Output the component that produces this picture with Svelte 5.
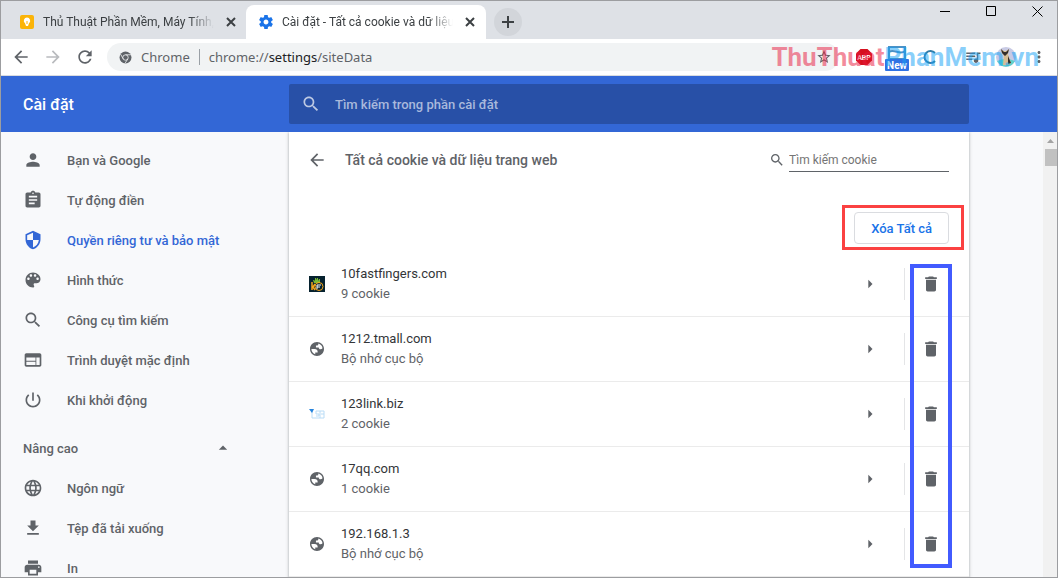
<script>
    const icons = {
        person: "M12 12c2.2 0 4-1.8 4-4s-1.800-4-4-4-4 1.800-4 4 1.800 4 4 4zm0 2c-2.700 0-8 1.300-8 4v2h16v-2c0-2.700-5.300-4-8-4z",
        autofill: "M19 3h-4.180C14.400 1.840 13.300 1 12 1s-2.400.84-2.820 2H5c-1.100 0-2 .9-2 2v14c0 1.100.9 2 2 2h14c1.100 0 2-.9 2-2V5c0-1.100-.9-2-2-2zm-7 0c.55 0 1 .45 1 1s-.45 1-1 1-1-.45-1-1 .45-1 1-1zm2 14H7v-2h7v2zm3-4H7v-2h10v2zm0-4H7V7h10v2z",
        shield: "M12 1L3 5v6c0 5.550 3.840 10.740 9 12 5.160-1.260 9-6.450 9-12V5l-9-4zm0 10.990h7c-.53 4.120-3.280 7.790-7 8.940V12H5V6.300l7-3.110v8.800z",
        palette: "M12 3c-4.970 0-9 4.030-9 9s4.030 9 9 9c.83 0 1.500-.67 1.500-1.500 0-.39-.15-.74-.39-1.010-.23-.26-.38-.61-.38-.99 0-.83.67-1.500 1.500-1.500H16c2.760 0 5-2.240 5-5 0-4.420-4.030-8-9-8zm-5.500 9c-.83 0-1.500-.67-1.500-1.500S5.670 9 6.500 9 8 9.670 8 10.500 7.330 12 6.500 12zm3-4C8.670 8 8 7.330 8 6.500S8.670 5 9.500 5s1.500.67 1.500 1.500S10.330 8 9.500 8zm5 0c-.83 0-1.500-.67-1.500-1.500S13.670 5 14.500 5s1.500.67 1.500 1.500S15.330 8 14.500 8zm3 4c-.83 0-1.500-.67-1.500-1.500S16.670 9 17.500 9s1.500.67 1.500 1.500-.67 1.500-1.500 1.500z",
        search: "M15.500 14h-.79l-.28-.27C15.410 12.590 16 11.110 16 9.500 16 5.910 13.090 3 9.500 3S3 5.910 3 9.500 5.910 16 9.500 16c1.610 0 3.090-.59 4.230-1.570l.27.28v.79l5 4.990L20.490 19l-4.990-5zm-6 0C7.010 14 5 11.990 5 9.500S7.010 5 9.500 5 14 7.010 14 9.500 11.990 14 9.500 14z",
        browser: "M20 4H4c-1.100 0-1.990.9-1.990 2L2 18c0 1.100.9 2 2 2h16c1.100 0 2-.9 2-2V6c0-1.100-.9-2-2-2zm-5 14H4v-4h11v4zm0-5H4V9h11v4zm5 5h-4V9h4v9z",
        power: "M13 3h-2v10h2V3zm4.830 2.170l-1.420 1.420C17.990 7.860 19 9.810 19 12c0 3.870-3.130 7-7 7s-7-3.130-7-7c0-2.190 1.010-4.140 2.580-5.420L6.170 5.170C4.230 6.820 3 9.260 3 12c0 4.970 4.030 9 9 9s9-4.030 9-9c0-2.740-1.230-5.180-3.170-6.830z",
        language: "M11.990 2C6.470 2 2 6.480 2 12s4.470 10 9.990 10C17.520 22 22 17.520 22 12S17.520 2 11.990 2zm6.930 6h-2.950c-.32-1.250-.78-2.450-1.380-3.560 1.840.63 3.370 1.910 4.330 3.560zM12 4.040c.83 1.200 1.480 2.530 1.910 3.960h-3.820c.43-1.430 1.080-2.760 1.910-3.960zM4.260 14C4.100 13.360 4 12.690 4 12s.1-1.360.26-2h3.380c-.08.66-.14 1.320-.14 2s.06 1.340.14 2H4.260zm.82 2h2.950c.32 1.250.78 2.450 1.380 3.560-1.840-.63-3.370-1.900-4.330-3.560zm2.950-8H5.080c.96-1.660 2.490-2.930 4.330-3.560C8.810 5.550 8.350 6.750 8.030 8zM12 19.960c-.83-1.200-1.480-2.530-1.910-3.960h3.820c-.43 1.430-1.080 2.760-1.910 3.960zM14.340 14H9.660c-.09-.66-.16-1.320-.16-2s.07-1.350.16-2h4.680c.09.65.16 1.320.16 2s-.07 1.340-.16 2zm.25 5.560c.6-1.110 1.060-2.310 1.380-3.560h2.950c-.96 1.650-2.490 2.930-4.330 3.560zM16.360 14c.08-.66.14-1.320.14-2s-.06-1.340-.14-2h3.380c.16.64.26 1.310.26 2s-.1 1.360-.26 2h-3.380z",
        download: "M19 9h-4V3H9v6H5l7 7 7-7zM5 18v2h14v-2H5z",
        print: "M19 8H5c-1.660 0-3 1.340-3 3v6h4v4h12v-4h4v-6c0-1.660-1.340-3-3-3zm-3 11H8v-5h8v5zm3-7c-.55 0-1-.45-1-1s.45-1 1-1 1 .45 1 1-.45 1-1 1zm-1-9H6v4h12V3z",
        back: "M20 11H7.830l5.590-5.590L12 4l-8 8 8 8 1.410-1.410L7.830 13H20v-2z",
        forward: "M12 4l-1.410 1.410L16.170 11H4v2h12.170l-5.580 5.590L12 20l8-8z",
        reload: "M17.650 6.350C16.200 4.900 14.210 4 12 4c-4.420 0-7.990 3.580-7.990 8s3.570 8 7.990 8c3.730 0 6.840-2.550 7.730-6h-2.080c-.82 2.330-3.040 4-5.650 4-3.310 0-6-2.690-6-6s2.690-6 6-6c1.660 0 3.140.69 4.220 1.780L13 11h7V4l-2.350 2.350z",
        gear: "M19.430 12.980c.04-.32.07-.64.07-.98s-.03-.66-.07-.98l2.110-1.650c.19-.15.24-.42.12-.64l-2-3.460c-.12-.22-.39-.3-.61-.22l-2.490 1c-.52-.4-1.080-.73-1.690-.98l-.38-2.650C14.460 2.180 14.250 2 14 2h-4c-.25 0-.46.18-.49.42l-.38 2.650c-.61.25-1.170.59-1.690.98l-2.490-1c-.23-.09-.49 0-.61.22l-2 3.460c-.13.22-.07.49.12.64l2.110 1.650c-.04.32-.07.65-.07.98s.03.66.07.98l-2.110 1.650c-.19.15-.24.42-.12.64l2 3.460c.12.22.39.3.61.22l2.490-1c.52.4 1.080.73 1.690.98l.38 2.650c.03.24.24.42.49.42h4c.25 0 .46-.18.49-.42l.38-2.650c.61-.25 1.170-.59 1.690-.98l2.490 1c.23.09.49 0 .61-.22l2-3.460c.12-.22.07-.49-.12-.64l-2.110-1.650zM12 15.500c-1.930 0-3.500-1.570-3.500-3.500s1.570-3.500 3.500-3.500 3.500 1.570 3.500 3.500-1.570 3.500-3.500 3.500z",
        star: "M22 9.240l-7.190-.62L12 2 9.190 8.630 2 9.240l5.460 4.730L5.820 21 12 17.270 18.180 21l-1.630-7.030L22 9.240zM12 15.400l-3.760 2.270 1-4.280-3.320-2.880 4.380-.38L12 6.100l1.710 4.040 4.380.38-3.320 2.880 1 4.280L12 15.400z",
        queue: "M15 6H3v2h12V6zm0 4H3v2h12v-2zM3 16h8v-2H3v2zM17 6v8.180c-.31-.11-.65-.18-1-.18-1.660 0-3 1.340-3 3s1.340 3 3 3 3-1.340 3-3V8h3V6h-5z",
        more: "M12 8c1.100 0 2-.9 2-2s-.9-2-2-2-2 .9-2 2 .9 2 2 2zm0 2c-1.100 0-2 .9-2 2s.9 2 2 2 2-.9 2-2-.9-2-2-2zm0 6c-1.100 0-2 .9-2 2s.9 2 2 2 2-.9 2-2-.9-2-2-2z",
        trash: "M6 19c0 1.100.9 2 2 2h8c1.100 0 2-.9 2-2V7H6v12zM19 4h-3.500l-1-1h-5l-1 1H5v2h14V4z",
        globe: "M12 2C6.480 2 2 6.480 2 12s4.480 10 10 10 10-4.480 10-10S17.520 2 12 2zM4 12h4.400c3.410.02 4.910 1.730 4.500 5.130H9.500v2.470C6.300 18.700 4 15.600 4 12zm15.900-1c-.6 1-1.600 1.500-2.900 1.500-1.600 0-2.500-.9-2.500-2.500h-4V7.100h2.400c.6-.9 1.100-1.500 1.100-2.900 3.200.8 5.600 3.500 5.900 6.800z",
        up: "M7 14l5-5 5 5z",
        right: "M10 17l5-5-5-5v10z",
    }

    const basicItems = [
        { icon: "person", label: "Bạn và Google" },
        { icon: "autofill", label: "Tự động điền" },
        { icon: "shield", label: "Quyền riêng tư và bảo mật", selected: true },
        { icon: "palette", label: "Hình thức" },
        { icon: "search", label: "Công cụ tìm kiếm" },
        { icon: "browser", label: "Trình duyệt mặc định" },
        { icon: "power", label: "Khi khởi động" },
    ]
    const advancedItems = [
        { icon: "language", label: "Ngôn ngữ" },
        { icon: "download", label: "Tệp đã tải xuống" },
        { icon: "print", label: "In" },
    ]
    const sites = [
        { name: "10fastfingers.com", data: "9 cookie", favicon: "fingers" },
        { name: "1212.tmall.com", data: "Bộ nhớ cục bộ" },
        { name: "123link.biz", data: "2 cookie", favicon: "link" },
        { name: "17qq.com", data: "1 cookie" },
        { name: "192.168.1.3", data: "Bộ nhớ cục bộ" },
    ]
</script>

{#snippet icon(name, size = "md")}
    <svg class="icon {size}" viewBox="0 0 24 24" aria-hidden="true"><path d={icons[name]} /></svg>
{/snippet}

{#snippet cross()}
    <svg class="cross" viewBox="0 0 10 10" aria-hidden="true"><path d="M1 1l8 8M9 1l-8 8" /></svg>
{/snippet}

{#snippet menu(items)}
    {#each items as item}
        <a class="item" class:selected={item.selected} href="#{item.icon}">
            {@render icon(item.icon)}
            <span>{item.label}</span>
        </a>
    {/each}
{/snippet}

<div class="window">
    <div class="titlebar">
        <div class="tab">
            <svg class="tab-icon" viewBox="0 0 14 14" aria-hidden="true">
                <rect width="14" height="14" rx="2" fill="#fbb408" />
                <path d="M7 2.500a3.200 3.200 0 0 0-2 5.700L6 11h2l1-2.800A3.200 3.200 0 0 0 7 2.500z" fill="#fff" />
                <path d="M7 6v3" stroke="#fbb408" />
            </svg>
            <span class="tab-title">Thủ Thuật Phần Mềm, Máy Tính,</span>
            <button aria-label="Đóng thẻ">{@render cross()}</button>
        </div>
        <div class="tab active">
            <svg class="tab-icon gear" viewBox="2 2 20 20" aria-hidden="true"><path d={icons.gear} /></svg>
            <span class="tab-title">Cài đặt - Tất cả cookie và dữ liệu</span>
            <button aria-label="Đóng thẻ">{@render cross()}</button>
        </div>
        <button class="new-tab" aria-label="Thẻ mới">
            <svg viewBox="0 0 12 12" aria-hidden="true"><path d="M6 0v12M0 6h12" /></svg>
        </button>
        <div class="controls">
            <button aria-label="Thu nhỏ"><svg viewBox="0 0 11 11"><path d="M0 5.500h10" /></svg></button>
            <button aria-label="Phóng to"><svg viewBox="0 0 11 11"><path d="M.5.5h9v9h-9z" /></svg></button>
            <button aria-label="Đóng"><svg viewBox="0 0 11 11"><path d="M.5.500l10 10M10.500.500l-10 10" /></svg></button>
        </div>
    </div>

    <div class="toolbar">
        <button class="nav" aria-label="Quay lại">{@render icon("back")}</button>
        <button class="nav off" aria-label="Tiến">{@render icon("forward")}</button>
        <button class="nav" aria-label="Tải lại">{@render icon("reload")}</button>
        <div class="omnibox">
            <svg class="chrome" viewBox="0 0 24 24" aria-hidden="true">
                <circle cx="12" cy="12" r="11" fill="#5f6368" />
                <circle cx="12" cy="12" r="5" fill="none" stroke="#f1f3f4" stroke-width="1.500" />
                <path d="M12 7h10M7.700 14.500L3 6M16.300 14.500L11 23" stroke="#f1f3f4" stroke-width="1.500" />
            </svg>
            <span>Chrome</span>
            <i></i>
            <span class="url">chrome://<b>settings</b>/siteData</span>
            <button aria-label="Đánh dấu trang">{@render icon("star", "sm")}</button>
        </div>
        <div class="extensions">
            <button aria-label="Adblock Plus">
                <svg viewBox="0 0 18 18">
                    <path d="M5.500 1h7L17 5.500v7L12.500 17h-7L1 12.500v-7z" fill="#d5101f" />
                    <text x="9" y="12" text-anchor="middle">ABP</text>
                </svg>
            </button>
            <button aria-label="Tiện ích mới">
                <svg class="fresh" viewBox="0 0 24 28">
                    <path d="M4 4h16v12H4zM4 9c5-4 11 4 16-1" fill="none" stroke="#4b91c5" stroke-width="2" />
                    <rect y="16" width="24" height="12" rx="1" fill="#2f72e4" />
                    <text x="12" y="26" text-anchor="middle">New</text>
                </svg>
            </button>
            <button aria-label="Cốc Cốc">
                <svg viewBox="0 0 18 18"><path d="M14 5a6 6 0 1 0 0 8" fill="none" stroke="#337da8" stroke-width="2" /></svg>
            </button>
            <button class="media" aria-label="Danh sách phát">{@render icon("queue")}</button>
            <button aria-label="Hồ sơ">
                <svg class="avatar" viewBox="0 0 20 20">
                    <circle cx="10" cy="10" r="10" fill="#c8cae4" />
                    <path d="M1 14q9-4 18 0a10 10 0 0 1-18 0z" fill="#5ed1cc" />
                    <path d="M5 2l3 2h2l3-2-1 5 3 9-2 2H7l1-9-2-3z" fill="#d7bd94" />
                    <path d="M5 2l3 3h2l3-3-1 4-3 3-3-3zM12 9l3 7-3 1z" fill="#342d2b" />
                </svg>
            </button>
            <button aria-label="Tùy chỉnh">{@render icon("more")}</button>
        </div>
        <div class="watermark"><span>ThuThuat</span><span class="blue">PhanMem.vn</span></div>
    </div>

    <header>
        <h1>Cài đặt</h1>
        <label class="search">
            {@render icon("search")}
            <input type="search" placeholder="Tìm kiếm trong phần cài đặt" aria-label="Tìm kiếm trong phần cài đặt" />
        </label>
    </header>

    <div class="body">
        <nav class="sidebar">
            {@render menu(basicItems)}
            <button class="advanced">Nâng cao {@render icon("up")}</button>
            {@render menu(advancedItems)}
        </nav>

        <main>
            <div class="heading">
                <button aria-label="Quay lại">{@render icon("back")}</button>
                <h2>Tất cả cookie và dữ liệu trang web</h2>
                <label class="filter">
                    {@render icon("search", "sm")}
                    <input type="search" placeholder="Tìm kiếm cookie" aria-label="Tìm kiếm cookie" />
                </label>
            </div>
            <div class="actions">
                <div class="marked">
                    <button class="clear">Xóa Tất cả</button>
                </div>
            </div>
            <div class="sites">
                {#each sites as site}
                    <div class="site">
                        {#if site.favicon == "fingers"}
                            <svg class="favicon" viewBox="0 0 16 16" aria-hidden="true">
                                <rect width="16" height="16" fill="#06222f" />
                                <path d="M5 7l-1-3h1l1 1V2h1v2l1-2h1v3l1-2h1v4z" fill="#79b833" />
                                <path d="M3 6v8M6 8l-2 3 2 3" fill="none" stroke="#f5a51b" stroke-width="1.500" />
                                <circle cx="10" cy="10.500" r="4" fill="none" stroke="#f5a51b" />
                                <path d="M8 13V9h4M8 11h3" fill="none" stroke="#fff" />
                            </svg>
                        {:else if site.favicon == "link"}
                            <svg class="favicon" viewBox="0 0 16 16" aria-hidden="true">
                                <path d="M3 5v7h12V5H7v3h3v2H7M11 5v7M12 8h3" fill="none" stroke="#b9dcf6" />
                                <path d="M0 3h5L3 7z" fill="#2583dc" />
                            </svg>
                        {:else}
                            <svg class="favicon globe" viewBox="2 2 20 20" aria-hidden="true"><path d={icons.globe} /></svg>
                        {/if}
                        <div class="details">
                            <div class="name">{site.name}</div>
                            <div class="data">{site.data}</div>
                        </div>
                        <button class="open" aria-label="Mở {site.name}">{@render icon("right")}</button>
                        <button class="delete" aria-label="Xóa {site.name}">{@render icon("trash")}</button>
                    </div>
                {/each}
                <div class="delete-mark"></div>
            </div>
        </main>

        <div class="scrollbar">
            <svg viewBox="0 0 7 4" aria-hidden="true"><path d="M0 4l3.500-4L7 4z" /></svg>
            <div class="thumb"></div>
        </div>
    </div>
</div>

<style>
    :global(body){
        font-family: Roboto, "Liberation Sans", sans-serif;
        font-size: 13px;
        color: #5f6368;
    }

    .window{
        box-sizing: border-box;
        height: 100vh;
        display: flex;
        flex-direction: column;
        overflow: hidden;
        border: 1px solid #9c9da0;
        background: #f8f9fb;
    }

    button{
        display: flex;
        align-items: center;
        justify-content: center;
        padding: 0;
        border: 0;
        background: none;
        color: inherit;
        font: inherit;
    }

    input{
        min-width: 0;
        padding: 0;
        border: 0;
        outline: 0;
        background: none;
        font: inherit;
    }

    h1, h2{
        margin: 0;
        font-weight: 500;
    }

    .icon{
        flex: none;
        width: 20px;
        height: 20px;
        fill: currentColor;
    }

    .icon.sm{
        width: 16px;
        height: 16px;
    }

    .titlebar{
        flex: none;
        display: flex;
        height: 38px;
        background: #dee1e6;
        color: #3c4043;
        font-size: 12px;
    }

    .tab{
        box-sizing: border-box;
        display: flex;
        align-items: center;
        gap: 9px;
        width: 240px;
        margin-top: 4px;
        padding: 0 8px 0 13px;
        border-radius: 8px 8px 0 0;
    }

    .tab:first-child{
        width: 245px;
        padding: 0 7px 0 19px;
    }

    .tab.active{
        background: white;
    }

    .tab-icon{
        flex: none;
        width: 14px;
        height: 14px;
    }

    .gear{
        fill: #1a73e8;
    }

    .tab-title{
        flex: 1;
        overflow: hidden;
        white-space: nowrap;
        mask-image: linear-gradient(to left, transparent, black 24px);
    }

    .tab button{
        width: 16px;
        height: 16px;
    }

    .cross{
        width: 10px;
        height: 10px;
        stroke: #3c4043;
        stroke-width: 2;
    }

    .new-tab{
        width: 28px;
        height: 28px;
        margin: 7px 0 0 8px;
        border-radius: 50%;
        background: #d2d5da;
    }

    .new-tab svg{
        width: 12px;
        height: 12px;
        stroke: #3c4043;
        stroke-width: 2;
    }

    .controls{
        display: flex;
        gap: 6px;
        margin-left: auto;
    }

    .controls button{
        width: 40px;
        height: 20px;
    }

    .controls svg{
        width: 11px;
        height: 11px;
        fill: none;
        stroke: black;
    }

    .toolbar{
        flex: none;
        position: relative;
        display: flex;
        align-items: center;
        height: 36px;
        padding: 0 2px 0 4px;
        border-bottom: 1px solid #dadce0;
        background: white;
    }

    .nav{
        width: 32px;
        height: 28px;
    }

    .nav.off{
        color: #b9bbbe;
    }

    .omnibox{
        flex: 1;
        display: flex;
        align-items: center;
        gap: 9px;
        height: 28px;
        margin-left: 6px;
        padding: 0 7px 0 12px;
        border-radius: 14px;
        background: #f1f3f4;
        font-family: "Noto Sans", "Open Sans", sans-serif;
    }

    .omnibox i{
        width: 1px;
        height: 16px;
        background: #9aa0a6;
    }

    .omnibox b{
        color: #202124;
        font-weight: 400;
    }

    .url{
        flex: 1;
    }

    .chrome{
        width: 13px;
        height: 13px;
    }

    .extensions{
        display: flex;
        margin-left: 8px;
    }

    .extensions button{
        width: 33px;
        height: 28px;
    }

    .extensions svg{
        width: 18px;
        height: 18px;
    }

    .extensions .fresh{
        width: 24px;
        height: 28px;
    }

    .extensions .avatar{
        width: 20px;
        height: 20px;
    }

    .extensions text{
        fill: white;
        font-size: 7px;
        font-weight: 700;
    }

    .extensions .fresh text{
        font-size: 10px;
    }

    .extensions .media{
        margin-left: 10px;
    }

    .watermark{
        position: absolute;
        top: 0;
        right: 18px;
        color: rgba(232, 24, 60, 0.5);
        font-size: 26px;
        font-weight: 700;
        line-height: 36px;
        pointer-events: none;
    }

    .watermark .blue{
        color: rgba(20, 160, 245, 0.5);
    }

    header, .body{
        display: grid;
        grid-template-columns: 288px minmax(0, 680px) 1fr;
    }

    header{
        flex: none;
        align-items: center;
        height: 56px;
        background: #3367d6;
        color: white;
    }

    h1{
        padding-left: 22px;
        font-size: 16px;
    }

    .search{
        display: flex;
        align-items: center;
        gap: 14px;
        height: 40px;
        padding: 0 12px;
        border-radius: 2px;
        background: #2850a7;
        color: #bdc9e3;
        font-weight: 500;
    }

    .search input{
        flex: 1;
        color: white;
    }

    .search input::placeholder{
        color: #a9b9dc;
    }

    .body{
        flex: 1;
        min-height: 0;
    }

    .sidebar{
        padding-top: 8px;
        font-weight: 500;
    }

    .item{
        display: flex;
        align-items: center;
        gap: 24px;
        height: 40px;
        padding-left: 22px;
        color: inherit;
        text-decoration: none;
    }

    .item.selected{
        color: #3367d6;
    }

    .advanced{
        justify-content: space-between;
        width: 232px;
        height: 40px;
        margin-top: 8px;
        padding-left: 22px;
    }

    main{
        background: white;
        box-shadow: 0 1px 2px rgba(60, 64, 67, 0.3), 0 1px 3px 1px rgba(60, 64, 67, 0.15);
        clip-path: inset(0 -4px);
    }

    .heading{
        display: flex;
        align-items: center;
        height: 56px;
        padding: 0 20px 0 18px;
    }

    h2{
        flex: 1;
        padding-left: 18px;
        font-size: 14px;
    }

    .filter{
        display: flex;
        align-items: center;
        gap: 4px;
        font-size: 12px;
    }

    .filter input{
        width: 160px;
        height: 24px;
        border-bottom: 1px solid #5f6368;
    }

    .filter input::placeholder{
        color: #757575;
    }

    .actions{
        display: flex;
        justify-content: flex-end;
        padding: 24px 20px 8px;
    }

    .marked{
        position: relative;
    }

    .marked::after{
        content: "";
        position: absolute;
        inset: -7px -15px -6px -12px;
        border: 3px solid #fb4141;
        pointer-events: none;
    }

    .clear{
        height: 32px;
        padding: 0 16px;
        border: 1px solid #dadce0;
        border-radius: 4px;
        color: #1a73e8;
        font-weight: 500;
    }

    .sites{
        position: relative;
    }

    .site{
        display: flex;
        align-items: center;
        height: 64px;
        padding: 0 21px 0 20px;
        border-bottom: 1px solid #ebebeb;
    }

    .favicon{
        width: 16px;
        height: 16px;
    }

    .favicon.globe{
        box-sizing: border-box;
        padding: 1px;
        fill: #5f6368;
    }

    .details{
        flex: 1;
        padding-left: 16px;
        line-height: 20px;
    }

    .name{
        color: #333538;
    }

    .open{
        width: 36px;
        height: 36px;
        margin-right: 16px;
    }

    .delete{
        width: 44px;
        height: 32px;
        padding-left: 8px;
        border-left: 1px solid #e4e5e7;
    }

    .delete-mark{
        position: absolute;
        top: 12px;
        right: 17px;
        bottom: 9px;
        box-sizing: border-box;
        width: 42px;
        border: 4px solid #425bff;
        pointer-events: none;
    }

    .scrollbar{
        justify-self: end;
        display: flex;
        flex-direction: column;
        align-items: center;
        gap: 6px;
        width: 14px;
        padding-top: 7px;
        background: #f1f1f1;
    }

    .scrollbar svg{
        width: 7px;
        height: 4px;
        fill: #a3a3a3;
    }

    .thumb{
        align-self: flex-end;
        width: 12px;
        height: 17px;
        background: #c1c1c1;
    }
</style>
